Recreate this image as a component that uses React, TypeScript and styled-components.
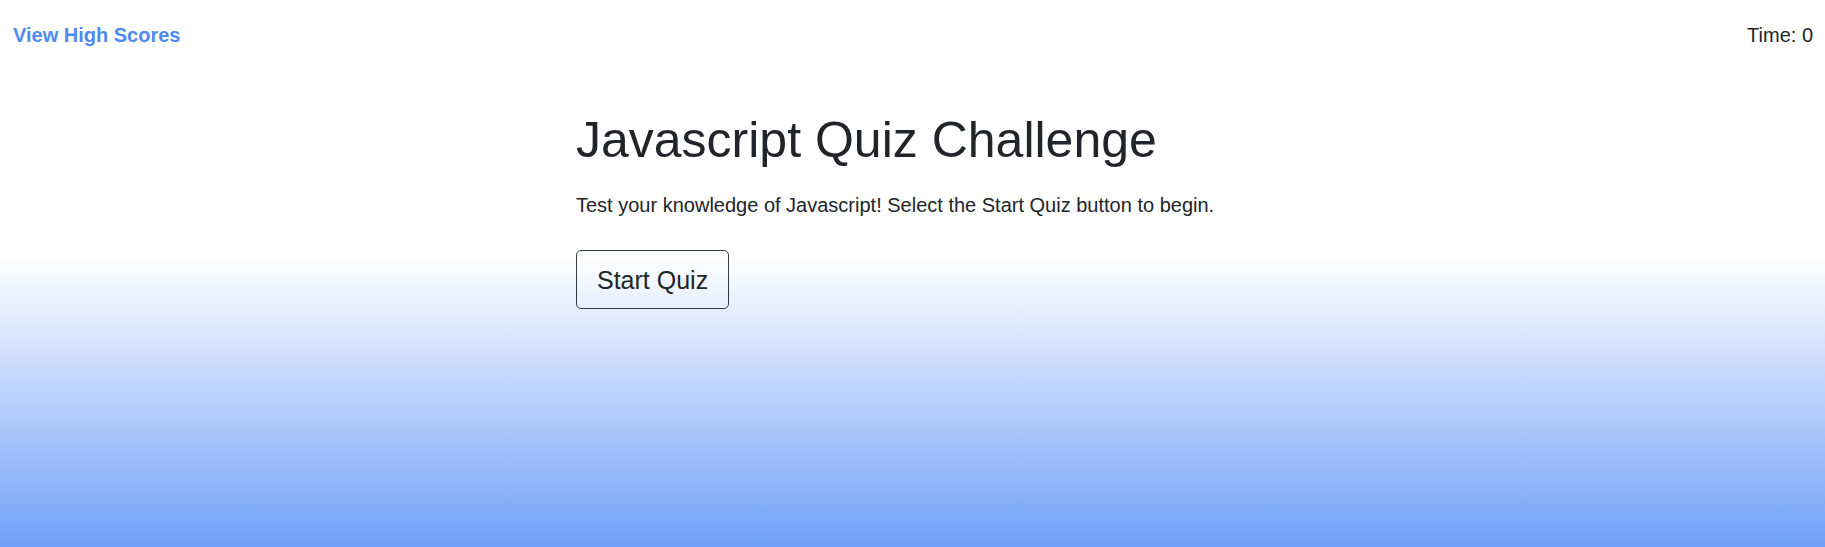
import styled, { createGlobalStyle } from "styled-components";

const GlobalStyle = createGlobalStyle`
  html,
  body {
    margin: 0;
    min-height: 100vh;
  }
  body {
    font-family: "Liberation Sans", Arial, sans-serif;
    color: #212529;
    background: linear-gradient(180deg, #ffffff 0%, #ffffff 47%, #6fa0f8 100%);
    background-attachment: fixed;
  }
  * {
    box-sizing: border-box;
  }
`;

const App = () => {
  return (
    <>
      <GlobalStyle />
      <Page>
        <Header>
          <ScoresLink href="#">View High Scores</ScoresLink>
          <Timer>Time: 0</Timer>
        </Header>
        <Main>
          <Title>Javascript Quiz Challenge</Title>
          <Intro>
            Test your knowledge of Javascript! Select the Start Quiz button to
            begin.
          </Intro>
          <StartButton type="button">Start Quiz</StartButton>
        </Main>
      </Page>
    </>
  );
};

export default App;

const Page = styled.div`
  display: flex;
  flex-direction: column;
  min-height: 100vh;
`;
const Header = styled.header`
  display: flex;
  justify-content: space-between;
  align-items: center;
  padding: 20px 12px 0 13px;
  font-size: 20px;
  line-height: 30px;
`;
const ScoresLink = styled.a`
  color: #4f8af0;
  font-weight: bold;
  text-decoration: none;
`;
const Timer = styled.span`
  color: #212529;
`;
const Main = styled.main`
  display: flex;
  flex-direction: column;
  align-items: flex-start;
  padding: 60px 0 0 576px;
`;
const Title = styled.h1`
  margin: 0 0 20px;
  font-size: 50px;
  font-weight: 400;
  line-height: 60px;
`;
const Intro = styled.p`
  margin: 0 0 30px;
  font-size: 20px;
  line-height: 30px;
`;
const StartButton = styled.button`
  font-family: inherit;
  font-size: 25px;
  line-height: 36px;
  color: #212529;
  background: transparent;
  border: 1px solid #343a40;
  border-radius: 5px;
  padding: 10.5px 20px;
  cursor: pointer;
`;
